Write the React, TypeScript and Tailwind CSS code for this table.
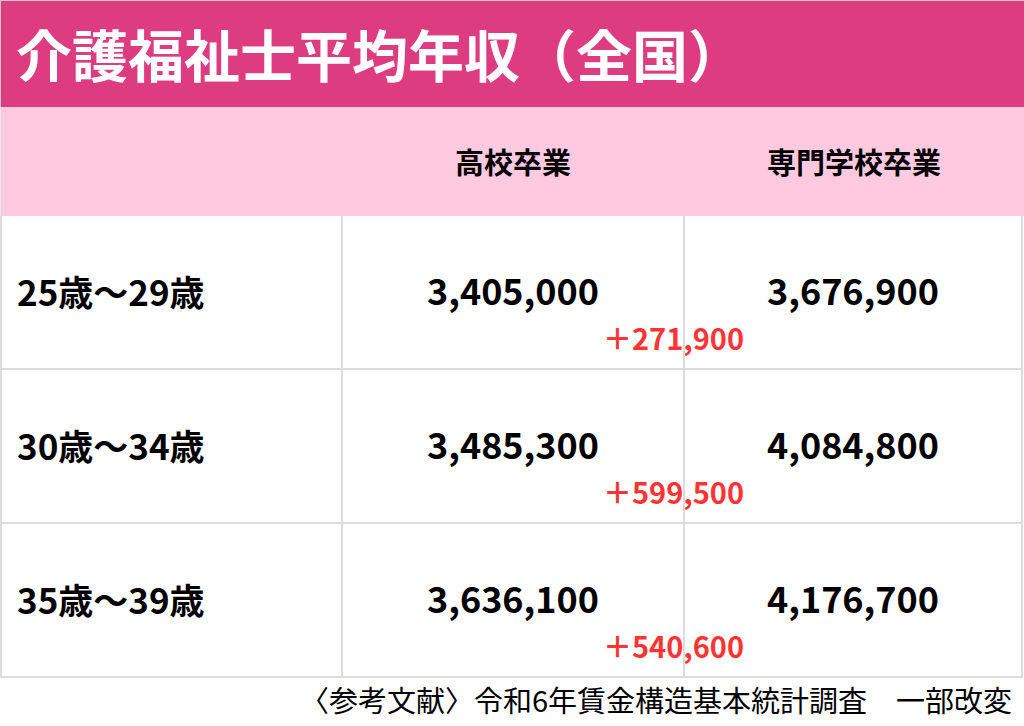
const rows = [
  { age: '25歳〜29歳', high: '3,405,000', college: '3,676,900', diff: '＋271,900' },
  { age: '30歳〜34歳', high: '3,485,300', college: '4,084,800', diff: '＋599,500' },
  { age: '35歳〜39歳', high: '3,636,100', college: '4,176,700', diff: '＋540,600' },
];

export default function App() {
  return (
    <div className="w-[1024px] h-[726px] bg-white overflow-hidden font-['Noto_Sans_CJK_JP','Noto_Sans',sans-serif] text-black">
      <div className="h-[107px] bg-[#dd3c80] border-t border-l border-[#c8c8c8] flex items-center pl-[15px]">
        <h1 className="text-[56px] leading-none font-bold text-white pb-[2px]">介護福祉士平均年収（全国）</h1>
      </div>

      <div className="grid grid-cols-[341px_342px_1fr] h-[109px] bg-[#ffcae0] border-l border-[#e8e8e8]">
        <div />
        <div className="flex items-center justify-center text-[29px] font-bold">高校卒業</div>
        <div className="flex items-center justify-center text-[29px] font-bold">専門学校卒業</div>
      </div>

      <div className="w-[1023px] border-l-2 border-r-2 border-[#dcdcdc]">
        {rows.map((r) => (
          <div key={r.age} className="relative grid grid-cols-[339px_342px_1fr] h-[154px] border-b-2 border-[#dcdcdc]">
            <div className="flex items-center pl-[15px] text-[35px] font-bold pb-[2px]">{r.age}</div>
            <div className="flex items-center justify-center border-l-2 border-[#dcdcdc] text-[36px] font-bold pb-[6px]">
              {r.high}
            </div>
            <div className="flex items-center justify-center border-l-2 border-[#dcdcdc] text-[36px] font-bold pb-[6px]">
              {r.college}
            </div>
            <span className="absolute right-[277px] top-[107px] text-[29px] leading-none font-bold text-[#ff3434]">
              {r.diff}
            </span>
          </div>
        ))}
      </div>

      <div className="flex justify-end pr-[12px] pt-[3px]">
        <p className="text-[29px] leading-[36px] whitespace-pre">〈参考文献〉令和6年賃金構造基本統計調査　一部改変</p>
      </div>
    </div>
  );
}
